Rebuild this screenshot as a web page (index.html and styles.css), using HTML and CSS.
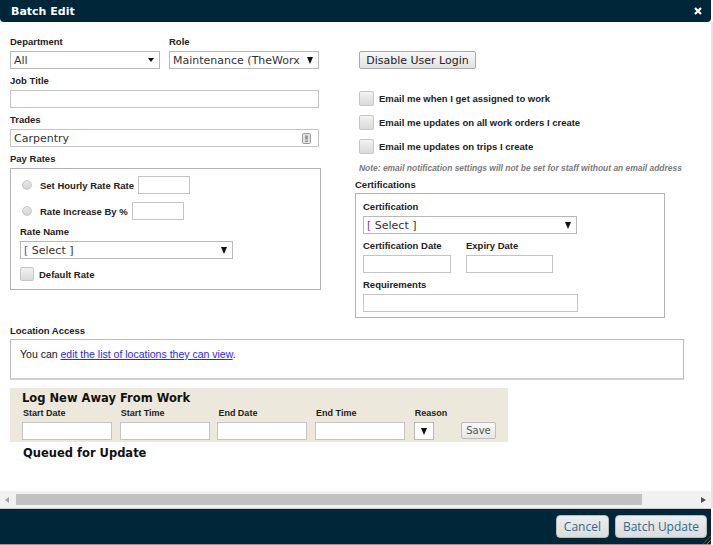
FILE: index.html
```html
<!DOCTYPE html>
<html>
<head>
    <meta charset="UTF-8">
    <title>Batch Edit</title>
    <link rel="stylesheet" href="styles.css">
</head>
<body>

<div class="m-dialog">
    <div class="u-titlebar">
        <span class="u-title">Batch Edit</span>
        <a href="javascript:;" class="u-close">
            <svg width="8" height="8" viewBox="0 0 8 8"><path d="M1 1L7 7M7 1L1 7" stroke="#fff" stroke-width="2.2"/></svg>
        </a>
    </div>

    <div class="u-body">
        <div class="u-content">
            <div class="cols">
                <!-- left column -->
                <div class="col-left">
                    <div class="pair">
                        <div class="group">
                            <label class="lbl">Department</label>
                            <div class="select"><span>All</span><i class="caret"></i></div>
                        </div>
                        <div class="group">
                            <label class="lbl">Role</label>
                            <div class="select"><span>Maintenance (TheWorx</span><i class="caret big"></i></div>
                        </div>
                    </div>
                    <div class="group">
                        <label class="lbl">Job Title</label>
                        <input type="text" class="txt wide">
                    </div>
                    <div class="group">
                        <label class="lbl">Trades</label>
                        <div class="txt wide trades">
                            <span>Carpentry</span>
                            <svg width="9" height="11" viewBox="0 0 9 11"><rect x="0.5" y="0.5" width="8" height="10" rx="1" fill="#e2e2e2" stroke="#9a9a9a"/><rect x="3" y="2.5" width="3" height="4" fill="#9a9a9a"/><rect x="3" y="7.5" width="3" height="1.5" fill="#9a9a9a"/></svg>
                        </div>
                    </div>
                    <label class="lbl">Pay Rates</label>
                    <div class="box pay">
                        <div class="rate-row">
                            <span class="radio"></span>
                            <label class="opt">Set Hourly Rate Rate</label>
                            <input type="text" class="txt small">
                        </div>
                        <div class="rate-row">
                            <span class="radio"></span>
                            <label class="opt">Rate Increase By %</label>
                            <input type="text" class="txt small">
                        </div>
                        <label class="lbl">Rate Name</label>
                        <div class="select rate-sel"><span><b class="br">[</b> Select ]</span><i class="caret big"></i></div>
                        <div class="check-row">
                            <span class="cb"></span>
                            <label class="opt">Default Rate</label>
                        </div>
                    </div>
                </div>

                <!-- right column -->
                <div class="col-right">
                    <div class="notify">
                        <button class="btn-disable">Disable User Login</button>
                        <div class="mail-row first"><span class="cb"></span><label class="opt">Email me when I get assigned to work</label></div>
                        <div class="mail-row"><span class="cb"></span><label class="opt">Email me updates on all work orders I create</label></div>
                        <div class="mail-row"><span class="cb"></span><label class="opt">Email me updates on trips I create</label></div>
                        <p class="note">Note: email notification settings will not be set for staff without an email address</p>
                    </div>
                    <label class="lbl cert-lbl">Certifications</label>
                    <div class="box cert">
                        <label class="lbl">Certification</label>
                        <div class="select cert-sel"><span><b class="br">[</b> Select ]</span><i class="caret big"></i></div>
                        <div class="dates">
                            <div class="group">
                                <label class="lbl">Certification Date</label>
                                <input type="text" class="txt d1">
                            </div>
                            <div class="group">
                                <label class="lbl">Expiry Date</label>
                                <input type="text" class="txt d2">
                            </div>
                        </div>
                        <label class="lbl">Requirements</label>
                        <input type="text" class="txt req">
                    </div>
                </div>
            </div>

            <label class="lbl loc-lbl">Location Access</label>
            <div class="loc-box">
                You can <a href="javascript:;">edit the list of locations they can view</a>.
            </div>

            <div class="away">
                <h3>Log New Away From Work</h3>
                <div class="away-row">
                    <div class="away-f"><label>Start Date</label><input type="text" class="txt"></div>
                    <div class="away-f"><label>Start Time</label><input type="text" class="txt"></div>
                    <div class="away-f"><label>End Date</label><input type="text" class="txt"></div>
                    <div class="away-f"><label>End Time</label><input type="text" class="txt"></div>
                    <div class="away-f reason"><label>Reason</label><div class="select tiny"><i class="caret big"></i></div></div>
                    <button class="btn-save">Save</button>
                </div>
            </div>

            <h3 class="queued">Queued for Update</h3>
        </div>

        <div class="u-hscroll">
            <span class="arr-l"></span>
            <span class="thumb"></span>
            <span class="arr-r"></span>
        </div>
    </div>

    <div class="u-footer">
        <button class="btn-foot">Cancel</button>
        <button class="btn-foot">Batch Update</button>
        <span class="grip"></span>
    </div>
</div>

</body>
</html>
```

FILE: styles.css
```css
*{ margin: 0; padding: 0; box-sizing: border-box; }
body {width: 713px;height: 545px;overflow: hidden;background: #fff;color: #222;font-family: "Liberation Sans", Arial, sans-serif;}
.m-dialog {width: 713px;height: 545px;display: flex;flex-direction: column;}

.u-titlebar {width: 711px;height: 22px;flex: none;background: #00263a;border-radius: 0 0 4px 4px;display: flex;align-items: center;justify-content: space-between;padding: 0 9px 0 11px;}
.u-title {color: #fff;font: bold 11px "DejaVu Sans", sans-serif;}
.u-close svg {display: block;}

.u-body {flex: 1;display: flex;flex-direction: column;border-right: 2px solid #e4e4e4;}
.u-content {flex: 1;padding: 14px 0 0 10px;}

.cols {display: grid;grid-template-columns: 311px 310px;column-gap: 34px;}
.lbl {display: block;font: bold 9.5px/12px "Liberation Sans", Arial, sans-serif;margin-bottom: 3px;}
.group {margin-bottom: 6px;}
.pair {display: grid;grid-template-columns: 150px 150px;column-gap: 9px;}

.txt {height: 18px;border: 1px solid #c4c4c4;background: #fff;font: 11px "DejaVu Sans", sans-serif;padding: 0 3px;outline: none;display: block;}
.wide {width: 309px;}
.trades {display: flex;align-items: center;justify-content: space-between;color: #333;padding: 0 7px 0 3px;}
.small {width: 52px;}

.select {height: 18px;border: 1px solid #b9b9b9;background: #fff;display: flex;align-items: center;justify-content: space-between;padding: 0 5px 0 3px;font: 11px "DejaVu Sans", sans-serif;color: #333;}
.caret {width: 0;height: 0;border-left: 3px solid transparent;border-right: 3px solid transparent;border-top: 4px solid #111;}
.caret.big {border-left-width: 3.5px;border-right-width: 3.5px;border-top-width: 7px;}
.br {font-weight: normal;color: #8a3d9c;}

.box {border: 1px solid #b3b3b3;}
.pay {width: 311px;height: 122px;padding: 7px 9px 0 9px;}
.rate-row {display: flex;align-items: center;height: 18px;margin-bottom: 8px;}
.rate-row + .rate-row {margin-bottom: 6px;}
.radio {width: 10px;height: 10px;border-radius: 50%;border: 1px solid #c9c9c9;background: linear-gradient(#e8e8e8, #d2d2d2);margin: 0 8px 0 2px;}
.opt {font: bold 9.5px "Liberation Sans", Arial, sans-serif;margin-right: 4px;}
.rate-sel {width: 213px;}
.check-row {display: flex;align-items: center;margin-top: 8px;}
.cb {width: 15px;height: 15px;flex: none;border: 1px solid #c6c6c6;border-radius: 2px;background: linear-gradient(#f2f2f2, #dadada);margin-right: 5px;}
.check-row .cb {width: 14px;height: 14px;}

.notify {padding-left: 4px;}
.btn-disable {display: block;margin-top: 15px;width: 117px;height: 18px;font: 11px "DejaVu Sans", sans-serif;color: #222;border: 1px solid #a9a9a9;border-radius: 2px;background: linear-gradient(#f7f7f7, #e2e2e2);}
.mail-row {display: flex;align-items: center;height: 15px;margin-bottom: 9px;}
.mail-row.first {margin-top: 22px;}
.mail-row .opt {font-size: 9.5px;}
.note {font: italic bold 8.45px/10px "Liberation Sans", Arial, sans-serif;color: #7a7a7a;white-space: nowrap;}
.cert-lbl {margin: 6px 0 2px;}
.cert {width: 310px;height: 125px;padding: 7px 7px;}
.cert-sel {width: 214px;margin-bottom: 6px;}
.dates {display: flex;gap: 15px;}
.d1 {width: 88px;}
.d2 {width: 87px;}
.req {width: 215px;}

.loc-lbl {margin: 7px 0 2px;}
.loc-box {width: 674px;height: 41px;border: 1px solid #bdbdbd;border-bottom: 2px solid #cfcfcf;padding: 7px 0 0 9px;font: 10.5px/14px "Liberation Sans", Arial, sans-serif;color: #111;}
.loc-box a {color: #2b2bd8;}

.away {width: 498px;height: 54px;margin-top: 8px;background: #ece9dc;padding: 4px 12px 0 12px;}
.away h3 {font: bold 11.5px/12px "DejaVu Sans", sans-serif;color: #111;}
.away-row {display: flex;align-items: flex-end;gap: 7.7px;margin-top: 4px;}
.away-f label {display: block;font: bold 9px/11px "Liberation Sans", Arial, sans-serif;margin: 0 0 3px 1px;}
.away-f .txt {width: 90px;}
.reason {margin-left: 1px;}
.select.tiny {width: 20px;padding: 0 0 0 6px;}
.btn-save {margin-left: 6px;width: 35px;height: 17px;margin-bottom: 1px;font: 10px "DejaVu Sans", sans-serif;color: #555;border: 1px solid #bdbdbd;border-radius: 2px;background: linear-gradient(#fafafa, #e6e6e6);}

.queued {font: bold 11.5px/12px "DejaVu Sans", sans-serif;color: #111;margin: 5px 0 0 13px;}

.u-hscroll {height: 17px;flex: none;background: #f1f1f1;display: flex;align-items: center;}
.arr-l {width: 0;height: 0;margin: 0 7px 0 5px;border-top: 3px solid transparent;border-bottom: 3px solid transparent;border-right: 4px solid #a3a3a3;}
.thumb {width: 626px;height: 11px;background: #c1c1c1;}
.arr-r {width: 0;height: 0;margin-left: 59px;border-top: 3.5px solid transparent;border-bottom: 3.5px solid transparent;border-left: 5px solid #505050;}

.u-footer {width: 711px;height: 37px;flex: none;position: relative;background: #00263a;border-top: 1px solid #c9c9c9;border-bottom: 1px solid #8b9aa3;display: flex;justify-content: flex-end;align-items: flex-start;gap: 6px;padding: 6px 4px 0 0;}
.btn-foot {height: 23px;padding: 0 7px;border-radius: 4px;border: 1px solid #b9b9b9;background: linear-gradient(#eeeeee, #dcdcdc);color: #32698f;font: 12px "Open Sans", sans-serif;}
.grip {position: absolute;right: 0;bottom: 0;width: 8px;height: 8px;background: repeating-linear-gradient(135deg, transparent 0 2px, #9c7a3c 2px 3px);clip-path: polygon(100% 0, 100% 100%, 0 100%);}
```
